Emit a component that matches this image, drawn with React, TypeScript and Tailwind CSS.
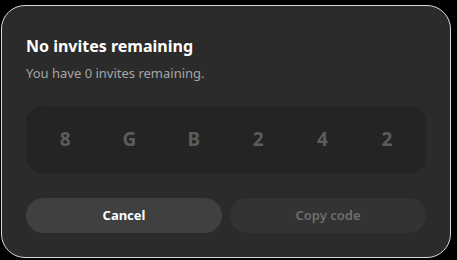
export default function App() {
  const code = ["8", "G", "B", "2", "4", "2"];

  return (
    <div className="h-[260px] w-[457px] bg-black pl-px pt-[5px] [font-family:'Noto_Sans','Open_Sans',sans-serif]">
      <div className="flex h-[253px] w-[450px] flex-col rounded-3xl border border-[#d9d9d9] bg-[#2b2b2b] px-[24px] pt-[28px]">
        <h2 className="text-[16px] font-bold leading-6 text-white">No invites remaining</h2>
        <p className="mt-[5px] text-[13px] leading-5 text-[#a6a6a6]">You have 0 invites remaining.</p>

        {/* invite code */}
        <div className="mt-[23px] grid h-[67px] grid-cols-6 items-center rounded-2xl bg-[#242424] px-[7px]">
          {code.map((ch, i) => (
            <span key={i} className="text-center text-[19px] font-bold text-[#5c5c5c]">
              {ch}
            </span>
          ))}
        </div>

        <div className="mt-[25px] grid grid-cols-2 gap-2">
          <button className="h-[35px] rounded-full bg-[#404040] text-[13px] font-bold text-white">
            Cancel
          </button>
          <button className="h-[35px] rounded-full bg-[#333333] text-[13px] font-semibold text-[#6e6e6e]">
            Copy code
          </button>
        </div>
      </div>
    </div>
  );
}
